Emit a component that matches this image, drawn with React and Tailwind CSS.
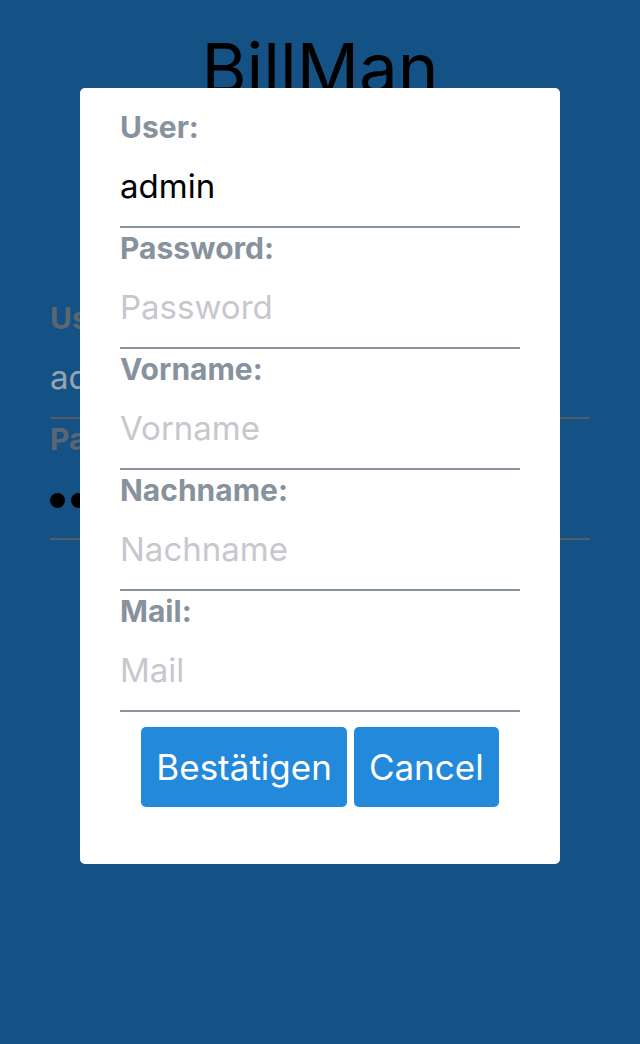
import React from "react";

const font = { fontFamily: "Inter, 'Noto Sans', sans-serif" };

function Field({ label, value, placeholder }) {
  return (
    <div className="flex flex-col border-b-2 border-[#89939d]">
      <div className="h-[36px] pt-[2px] text-[30px] leading-[36px] font-bold text-[#87929d]">{label}</div>
      <div className="h-[83px] pt-[4px] flex items-center">
        {value ? (
          <span className="text-[33px] text-black">{value}</span>
        ) : (
          <span className="text-[33px] text-[#c7c7cd]">{placeholder}</span>
        )}
      </div>
    </div>
  );
}

function BgField({ label, value, dots }) {
  return (
    <div className="flex flex-col border-b-2 border-[#545c65]">
      <div className="h-[36px] pt-[2px] text-[30px] leading-[36px] font-bold text-[#5b6672]">{label}</div>
      <div className="h-[83px] pt-[4px] flex items-center">
        {dots ? (
          <div className="flex gap-[6px] mt-[4px]">
            {[0, 1, 2, 3, 4].map((i) => (
              <span key={i} className="w-[15px] h-[15px] rounded-full bg-black" />
            ))}
          </div>
        ) : (
          <span className="text-[33px] text-[#9aa4ae]">{value}</span>
        )}
      </div>
    </div>
  );
}

export default function App() {
  return (
    <div className="w-[640px] h-[1044px] bg-[#145286] relative overflow-hidden" style={font}>
      <div className="pt-[34px] text-center text-[69px] leading-[69px] text-black">BillMan</div>
      <div className="mt-[195px] px-[50px] flex flex-col">
        <BgField label="User:" value="admin" />
        <BgField label="Password:" dots />
      </div>

      <div className="absolute inset-0 flex justify-center pt-[88px]">
        <div className="w-[480px] h-[776px] bg-white rounded-[5px] pt-[19px] px-[40px] flex flex-col">
          <Field label="User:" value="admin" />
          <Field label="Password:" placeholder="Password" />
          <Field label="Vorname:" placeholder="Vorname" />
          <Field label="Nachname:" placeholder="Nachname" />
          <Field label="Mail:" placeholder="Mail" />
          <div className="mt-[15px] flex justify-center gap-[7px]">
            <button className="h-[80px] px-[15px] rounded-[5px] bg-[#2389db] text-white text-[35px]">Bestätigen</button>
            <button className="h-[80px] px-[15px] rounded-[5px] bg-[#2389db] text-white text-[35px]">Cancel</button>
          </div>
        </div>
      </div>
    </div>
  );
}
